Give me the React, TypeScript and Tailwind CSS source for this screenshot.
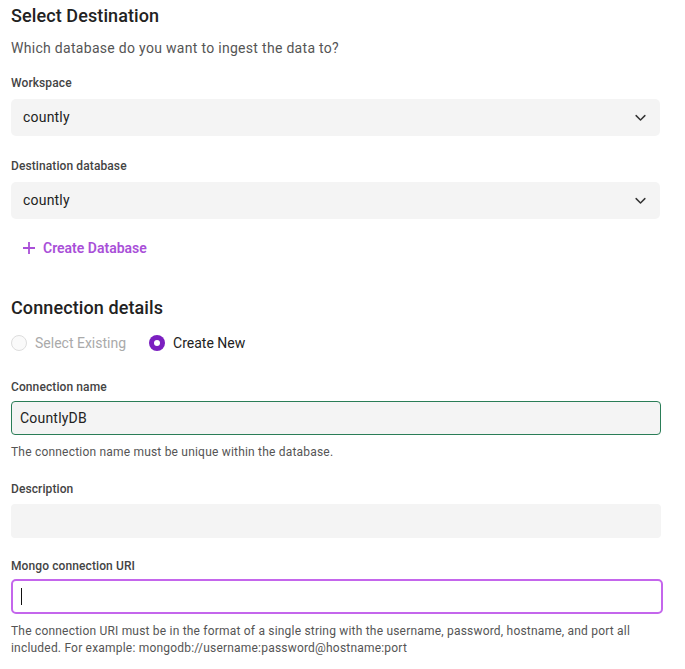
import React from "react";

const Chevron = () => (
  <svg width="15" height="15" viewBox="0 0 24 24" fill="none" stroke="#333" strokeWidth="2.3" strokeLinecap="round" strokeLinejoin="round">
    <path d="M5 9l7 7 7-7" />
  </svg>
);

const Label: React.FC<{ children: React.ReactNode }> = ({ children }) => (
  <div className="text-[12px] font-medium text-[#444] leading-[16px] tracking-[0.1px]">{children}</div>
);

const SelectBox: React.FC<{ value: string }> = ({ value }) => (
  <div className="mt-[8px] h-[37px] w-[649px] rounded-[5px] bg-[#f4f4f4] flex items-center justify-between pl-3 pr-[12px]">
    <span className="text-[14px] text-[#222] tracking-[0.2px]">{value}</span>
    <Chevron />
  </div>
);

export default function App() {
  return (
    <div className="bg-white min-h-screen pl-[11px] pt-[4px] text-[#222]" style={{ fontFamily: "Roboto, 'Noto Sans', sans-serif" }}>
      <h1 className="text-[18px] font-medium leading-[24px] text-[#222] tracking-[0.1px]">Select Destination</h1>
      <p className="mt-[11px] text-[14px] leading-[18px] text-[#555] tracking-[0.3px]">Which database do you want to ingest the data to?</p>

      <div className="mt-[18px]">
        <Label>Workspace</Label>
        <SelectBox value="countly" />
      </div>

      <div className="mt-[22px]">
        <Label>Destination database</Label>
        <SelectBox value="countly" />
      </div>

      <div className="mt-[20px] ml-[12px] flex items-center gap-[8px] text-[#a94fd8] text-[14px] font-semibold leading-[18px]">
        <svg width="12" height="12" viewBox="0 0 12 12" stroke="#a94fd8" strokeWidth="1.8">
          <path d="M6 0v12M0 6h12" />
        </svg>
        <span>Create Database</span>
      </div>

      <h2 className="mt-[39px] text-[18px] font-medium leading-[24px] text-[#222] tracking-[0.1px]">Connection details</h2>

      <div className="mt-[14px] flex items-center text-[14px] leading-[18px]">
        <span className="w-[16px] h-[16px] rounded-full border border-[#ddd] bg-[#fafafa]" />
        <span className="ml-[8px] text-[#aaa]">Select Existing</span>
        <span className="ml-[23px] w-[16px] h-[16px] rounded-full bg-[#7b1fc0] flex items-center justify-center">
          <span className="w-[6px] h-[6px] rounded-full bg-white" />
        </span>
        <span className="ml-[8px] text-[#222]">Create New</span>
      </div>

      <div className="mt-[27px]">
        <Label>Connection name</Label>
        <div className="mt-[6px] h-[34px] w-[650px] rounded-[4px] border border-[#2a7d57] bg-[#f4f4f4] flex items-center pl-[8px] text-[14px] text-[#222] tracking-[0.2px]">
          CountlyDB
        </div>
        <div className="mt-[9px] text-[12px] leading-[16px] text-[#555] tracking-[0.2px]">The connection name must be unique within the database.</div>
      </div>

      <div className="mt-[21px]">
        <Label>Description</Label>
        <div className="mt-[7px] h-[34px] w-[650px] rounded-[4px] bg-[#f4f4f4]" />
      </div>

      <div className="mt-[20px]">
        <Label>Mongo connection URI</Label>
        <div className="mt-[5px] h-[35px] w-[652px] rounded-[5px] border-[2.5px] border-[#c466ec] bg-white flex items-center pl-[8px]">
          <span className="w-[1px] h-[17px] bg-[#111]" />
        </div>
        <div className="mt-[9px] text-[12px] leading-[17px] text-[#555] tracking-[0.2px] w-[648px]">
          The connection URI must be in the format of a single string with the username, password, hostname, and port all included. For example: mongodb://username:password@hostname:port
        </div>
      </div>
    </div>
  );
}
